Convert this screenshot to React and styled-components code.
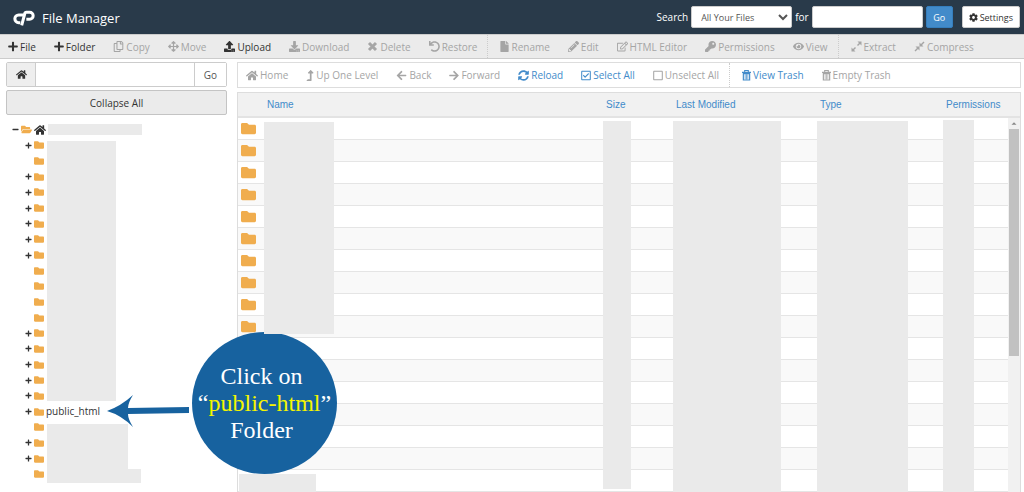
import React from "react";
import styled, { createGlobalStyle, css } from "styled-components";
import {
  FaArrowLeft,
  FaArrowRight,
  FaArrowsAlt,
  FaCog,
  FaDownload,
  FaEye,
  FaFile,
  FaFolder,
  FaFolderOpen,
  FaHome,
  FaKey,
  FaLevelUpAlt,
  FaMinus,
  FaPencilAlt,
  FaPlus,
  FaRegCheckSquare,
  FaRegCopy,
  FaRegEdit,
  FaRegSquare,
  FaSyncAlt,
  FaUndo,
  FaUpload,
} from "react-icons/fa";

const colors = {
  header: "#293a4a",
  bar: "#ebebeb",
  border: "#ddd",
  text: "#333",
  muted: "#a5a5a5",
  link: "#428bca",
  folder: "#f0ad4e",
  mask: "#eaeaea",
  callout: "#17629f",
};

const ExpandIcon = () => (
  <svg viewBox="0 0 22 22" fill="currentColor" aria-hidden="true">
    <path d="M13 1h8v8l-3-3-4 4-2-2 4-4zM9 21H1v-8l3 3 4-4 2 2-4 4z" />
  </svg>
);

const CompressIcon = () => (
  <svg viewBox="0 0 22 22" fill="currentColor" aria-hidden="true">
    <path d="M11 3v8h8l-3-3 5-5-2-2-5 5zM11 19v-8H3l3 3-5 5 2 2 5-5z" />
  </svg>
);

const TimesIcon = () => (
  <svg viewBox="0 0 22 22" fill="none" stroke="currentColor" aria-hidden="true">
    <path d="M4 4l14 14M18 4L4 18" strokeWidth="6" />
  </svg>
);

const TrashIcon = () => (
  <svg viewBox="0 0 20 24" fill="none" stroke="currentColor" aria-hidden="true">
    <path d="M0 5h20M6 5V1h8v4" strokeWidth="2.4" />
    <path d="M3 8h14v14H3z" strokeWidth="2.6" />
    <path d="M7 9v12M10 9v12M13 9v12" strokeWidth="1.6" />
  </svg>
);

const Logo = () => (
  <LogoSvg viewBox="0 0 66 46" aria-hidden="true">
    <path d="M30 14H17a11 11 0 0 0 0 23h5" />
    <path d="M26 45l9-34q1-5 5-5h10a10 10 0 0 1 0 21H40" />
  </LogoSvg>
);

const fileActions = [
  { label: "File", icon: FaPlus, size: 10, tone: "text" },
  { label: "Folder", icon: FaPlus, size: 10, tone: "text" },
  { label: "Copy", icon: FaRegCopy },
  { label: "Move", icon: FaArrowsAlt },
  { label: "Upload", icon: FaUpload, tone: "text" },
  { label: "Download", icon: FaDownload },
  { label: "Delete", icon: TimesIcon },
  { label: "Restore", icon: FaUndo },
  { label: "Rename", icon: FaFile, size: 9, divided: true },
  { label: "Edit", icon: FaPencilAlt },
  { label: "HTML Editor", icon: FaRegEdit },
  { label: "Permissions", icon: FaKey },
  { label: "View", icon: FaEye },
  { label: "Extract", icon: ExpandIcon, divided: true },
  { label: "Compress", icon: CompressIcon },
];

const navActions = [
  { label: "Home", icon: FaHome, size: 12 },
  { label: "Up One Level", icon: FaLevelUpAlt, size: 8 },
  { label: "Back", icon: FaArrowLeft },
  { label: "Forward", icon: FaArrowRight, size: 10 },
  { label: "Reload", icon: FaSyncAlt, tone: "link" },
  { label: "Select All", icon: FaRegCheckSquare, size: 10, tone: "link" },
  { label: "Unselect All", icon: FaRegSquare, size: 10 },
  { label: "View Trash", icon: TrashIcon, size: 9, tone: "link", divided: true },
  { label: "Empty Trash", icon: TrashIcon, size: 9 },
];

const columns = [
  { label: "Name", mask: { top: 29, width: 70, height: 212 } },
  { label: "Size", width: 70, mask: { top: 28, width: 28, height: 368 } },
  { label: "Last Modified", width: 144, mask: { top: 28, width: 108, height: 400 } },
  { label: "Type", width: 126, mask: { top: 28, width: 91, height: 400 } },
  { label: "Permissions", width: 77, mask: { top: 27, width: 31, height: 400 } },
];

// + marks a folder that can be opened, . an empty one
const treeRows = "+.++++++....+++++".split("").map((mark) => ({ open: mark === "+" }));
treeRows.push({ open: true, name: "public_html" });
treeRows.push({ open: false }, { open: true }, { open: true }, { open: false });

const fileRows = Array.from({ length: 17 }, (_, index) => ({ hasIcon: index < 10 }));

const Actions = ({ items }) =>
  items.map(({ label, icon: Icon, size = 11, tone = "muted", divided }) => (
    <Action key={label} type="button" $size={size} $tone={tone} $divided={divided}>
      <Icon />
      {label}
    </Action>
  ));

export default function App() {
  return (
    <Page>
      <GlobalStyle />
      <Header>
        <Logo />
        <Title>File Manager</Title>
        <SearchForm onSubmit={(event) => event.preventDefault()}>
          <label htmlFor="scope">Search</label>
          <Select id="scope">
            <option>All Your Files</option>
          </Select>
          <label htmlFor="query">for</label>
          <SearchInput id="query" type="text" />
          <GoButton type="submit">Go</GoButton>
          <SettingsButton type="button">
            <FaCog />
            Settings
          </SettingsButton>
        </SearchForm>
      </Header>
      <Toolbar>
        <Actions items={fileActions} />
      </Toolbar>
      <Content>
        <Sidebar>
          <PathForm onSubmit={(event) => event.preventDefault()}>
            <HomeButton type="button" aria-label="Home directory">
              <FaHome />
            </HomeButton>
            <PathInput type="text" aria-label="Path" />
            <PathGo type="submit">Go</PathGo>
          </PathForm>
          <CollapseButton type="button">Collapse All</CollapseButton>
          <Tree>
            <TreeRow $root>
              <Toggle type="button" aria-label="Collapse">
                <FaMinus />
              </Toggle>
              <FolderMark $open>
                <FaFolderOpen />
              </FolderMark>
              <HomeMark />
              <RootMask />
            </TreeRow>
            {treeRows.map((row, index) => (
              <TreeRow key={index}>
                <Toggle type="button" aria-label="Expand" disabled={!row.open}>
                  {row.open && <FaPlus />}
                </Toggle>
                <FolderMark>
                  <FaFolder />
                </FolderMark>
                {row.name && <TreeLink href="#public_html">{row.name}</TreeLink>}
              </TreeRow>
            ))}
            <TreeMask $top={19} $width={69} $height={260} />
            <TreeMask $top={302} $width={81} $height={46} />
            <TreeMask $top={347} $width={94} $height={14} />
          </Tree>
        </Sidebar>
        <Main>
          <NavBar>
            <Actions items={navActions} />
          </NavBar>
          <FileList>
            <Table>
              <thead>
                <tr>
                  <IconHead aria-label="Icon" />
                  {columns.map(({ label, width, mask }) => (
                    <HeadCell key={label} $width={width}>
                      {label}
                      <ColumnMask $top={mask.top} $width={mask.width} $height={mask.height} />
                    </HeadCell>
                  ))}
                </tr>
              </thead>
              <tbody>
                {fileRows.map((row, index) => (
                  <Row key={index}>
                    <td>{row.hasIcon && <FaFolder />}</td>
                    <td colSpan={columns.length} />
                  </Row>
                ))}
              </tbody>
            </Table>
            <ScrollTrack>
              <ScrollUp viewBox="0 0 12 11" aria-hidden="true">
                <path d="M3 7h6L6 4z" />
              </ScrollUp>
              <ScrollThumb />
            </ScrollTrack>
            <FooterMask />
          </FileList>
        </Main>
      </Content>
      <Arrow viewBox="0 0 82 32" aria-hidden="true">
        <path d="M0 16Q14 11 26 0Q21 8 21 13L82 12V18L21 19Q21 24 26 32Q14 20 0 16Z" />
      </Arrow>
      <Callout>
        <span>Click on&nbsp;</span>
        <span>
          “<mark>public-html</mark>”
        </span>
        <span>Folder&nbsp;</span>
      </Callout>
    </Page>
  );
}

const GlobalStyle = createGlobalStyle`
  * {
    box-sizing: border-box;
  }

  body {
    margin: 0;
    background: #fff;
    color: ${colors.text};
    font-family: "Open Sans", sans-serif;
    font-size: 10px;
  }

  button, input, select {
    margin: 0;
    font-family: inherit;
    font-size: inherit;
    color: inherit;
  }
`;

const Page = styled.div`
  position: relative;
  display: flex;
  flex-direction: column;
  height: 100vh;
  overflow: hidden;
`;

const Header = styled.header`
  display: flex;
  align-items: center;
  flex: none;
  height: 34px;
  padding: 0 4px 0 13px;
  background: ${colors.header};
  color: #fff;
`;

const LogoSvg = styled.svg`
  width: 22px;
  height: 16px;
  margin-top: 2px;
  fill: none;
  stroke: #fff;
  stroke-width: 9;
  stroke-linejoin: round;
`;

const Title = styled.h1`
  margin: 2px auto 0 7px;
  font-size: 13px;
  font-weight: 400;
`;

const SearchForm = styled.form`
  display: flex;
  align-items: center;
  gap: 3px;
`;

const control = css`
  height: 22px;
  border: 1px solid #ccc;
  border-radius: 2px;
  background: #fff;
  color: #555;
`;

const Select = styled.select`
  ${control}
  width: 101px;
  padding: 0 0 0 5px;
  font-size: 9px;
`;

const SearchInput = styled.input`
  ${control}
  width: 111px;
`;

const GoButton = styled.button`
  ${control}
  width: 27px;
  padding: 0;
  border-color: #357ebd;
  background: ${colors.link};
  color: #fff;
  font-size: 9px;
`;

const SettingsButton = styled.button`
  ${control}
  display: flex;
  align-items: center;
  gap: 2px;
  margin-left: 6px;
  padding: 0 6px;
  color: ${colors.text};
  font-size: 9px;
`;

const Toolbar = styled.nav`
  display: flex;
  flex: none;
  height: 25px;
  border-top: 1px solid #ccc;
  border-bottom: 1px solid #ccc;
  background: ${colors.bar};
`;

const Action = styled.button`
  display: flex;
  align-items: center;
  gap: 2px;
  padding: 0 10px 0 ${(props) => (props.$divided ? "12px" : "8px")};
  border: 0;
  border-left: ${(props) => (props.$divided ? "1px dotted #ccc" : "0")};
  background: none;
  color: ${(props) => colors[props.$tone]};
  white-space: nowrap;

  svg {
    flex: none;
    width: ${(props) => props.$size}px;
    height: 11px;
  }
`;

const Content = styled.div`
  display: flex;
  flex: 1;
  min-height: 0;
  padding: 3px 3px 0 6px;
`;

const Sidebar = styled.aside`
  flex: none;
  width: 221px;
  margin-right: 10px;
`;

const PathForm = styled.form`
  display: flex;
  height: 25px;
  border: 1px solid #ccc;
  border-radius: 2px;
`;

const HomeButton = styled.button`
  display: flex;
  align-items: center;
  justify-content: center;
  width: 29px;
  padding: 0;
  border: 0;
  border-right: 1px solid #ccc;
  background: #eee;
  font-size: 11px;
`;

const PathInput = styled.input`
  flex: 1;
  min-width: 0;
  border: 0;
`;

const PathGo = styled.button`
  width: 32px;
  padding: 0;
  border: 0;
  border-left: 1px solid #ccc;
  background: #fff;
  color: #555;
`;

const CollapseButton = styled.button`
  width: 100%;
  height: 25px;
  margin-top: 3px;
  border: 1px solid #c4c4c4;
  border-radius: 2px;
  background: ${colors.bar};
`;

const Tree = styled.ul`
  position: relative;
  display: grid;
  grid-auto-rows: 1fr;
  height: 360px;
  margin: 7px 0 0;
  padding: 0;
  list-style: none;
`;

const TreeRow = styled.li`
  display: flex;
  align-items: center;
  padding-left: ${(props) => (props.$root ? "6px" : "19px")};
`;

const Toggle = styled.button`
  display: flex;
  flex: none;
  width: 9px;
  padding: 0;
  border: 0;
  background: none;
  font-size: 7px;
`;

const FolderMark = styled.span`
  display: flex;
  flex: none;
  width: ${(props) => (props.$open ? "13px" : "12px")};
  color: ${colors.folder};
  font-size: ${(props) => (props.$open ? "11px" : "10px")};
`;

const HomeMark = styled(FaHome)`
  flex: none;
  font-size: 12px;
`;

const TreeLink = styled.a`
  color: ${colors.text};
  line-height: 15px;
  text-decoration: none;
`;

const RootMask = styled.span`
  width: 94px;
  height: 11px;
  margin-left: 2px;
  background: ${colors.mask};
`;

const Mask = styled.span`
  position: absolute;
  top: ${(props) => props.$top}px;
  width: ${(props) => props.$width}px;
  height: ${(props) => props.$height}px;
  background: ${colors.mask};
`;

const TreeMask = styled(Mask)`
  left: 41px;
`;

const Main = styled.main`
  display: flex;
  flex: 1;
  flex-direction: column;
  min-width: 0;
`;

const NavBar = styled.nav`
  display: flex;
  flex: none;
  height: 26px;
  border: 1px solid ${colors.border};
`;

const FileList = styled.section`
  position: relative;
  flex: 1;
  min-height: 0;
  margin-top: 4px;
  border: 1px solid ${colors.border};
  border-bottom: 0;
`;

const Table = styled.table`
  width: 100%;
  table-layout: fixed;
  border-spacing: 0;
`;

const HeadCell = styled.th`
  position: relative;
  width: ${(props) => (props.$width ? `${props.$width}px` : "auto")};
  height: 25px;
  padding: 0 0 0 3px;
  border-bottom: 2px solid #e3e3e3;
  background: #f1f1f1;
  color: ${colors.link};
  font-family: "Liberation Sans", sans-serif;
  font-weight: 400;
  text-align: left;
`;

const IconHead = styled(HeadCell)`
  width: 26px;
`;

const ColumnMask = styled(Mask)`
  left: 0;
  z-index: 2;
`;

const Row = styled.tr`
  background: #fff;

  &:nth-child(even) {
    background: #f9f9f9;
  }

  td {
    height: 22px;
    padding: 0 0 0 3px;
    border-bottom: 1px solid #e5e5e5;
  }

  svg {
    display: block;
    color: ${colors.folder};
    font-size: 15px;
  }
`;

const ScrollTrack = styled.div`
  position: absolute;
  top: 25px;
  right: 0;
  bottom: 0;
  width: 12px;
  padding: 0 1px;
  background: #f1f1f1;
`;

const ScrollUp = styled.svg`
  display: block;
  width: 10px;
  height: 11px;
  fill: #888;
`;

const ScrollThumb = styled.div`
  height: 227px;
  background: #c1c1c1;
`;

const FooterMask = styled.span`
  position: absolute;
  bottom: 0;
  left: 1px;
  width: 77px;
  height: 18px;
  background: ${colors.mask};
`;

const Arrow = styled.svg`
  position: absolute;
  top: 395px;
  left: 107px;
  width: 82px;
  height: 32px;
  fill: ${colors.callout};
`;

const Callout = styled.div`
  position: absolute;
  top: 332px;
  left: 192px;
  z-index: 1;
  display: flex;
  flex-direction: column;
  align-items: center;
  justify-content: center;
  width: 145px;
  height: 142px;
  border-radius: 50%;
  background: ${colors.callout};
  color: #fff;
  font-family: "Liberation Serif", serif;
  font-size: 24px;
  line-height: 27px;

  mark {
    background: none;
    color: #f5f500;
  }
`;
